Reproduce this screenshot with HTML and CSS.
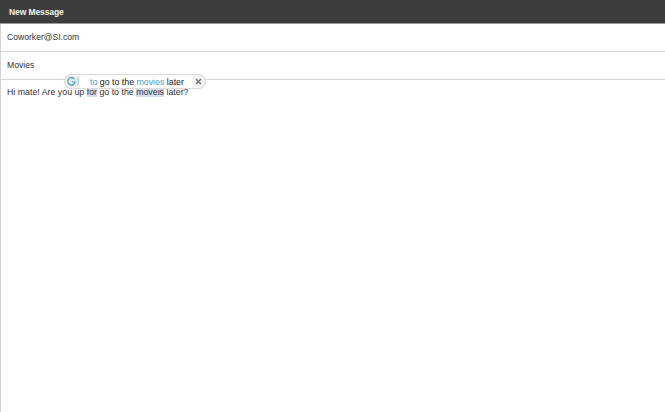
FILE: index.html
```html
<!DOCTYPE html>
<html lang="en">
<head>
<meta charset="utf-8">
<title>New Message</title>
<link rel="stylesheet" href="styles.css">
</head>
<body>
<div class="compose">
  <header class="title-bar">New Message</header>
  <div class="field">Coworker@SI.com</div>
  <div class="field">Movies</div>
  <div class="body-wrap">
    <div class="suggestion">
      <svg class="g-icon" width="15" height="13" viewBox="0 0 15 13" aria-hidden="true">
        <circle cx="6.5" cy="6.5" r="6" fill="#e3e8ea"/>
        <path d="M9.2 3.9A3.7 3.7 0 1 0 10.1 7H6.8" fill="none" stroke="#4b9fae" stroke-width="1.2"/>
        <path d="M12.6 2.5Q14.4 6.5 12.6 10.5" fill="none" stroke="#8fc3cf" stroke-width="1"/>
      </svg>
      <div class="suggestion-text"><span class="fix">to</span> go to the <span class="fix">movies</span> later</div>
      <svg class="close-icon" width="7" height="7" viewBox="0 0 7 7" aria-hidden="true">
        <path d="M1 1L6 6M6 1L1 6" stroke="#777" stroke-width="1.5"/>
      </svg>
    </div>
    <p class="message">Hi mate! Are you up <span class="mark">for</span> go to the <span class="mark">moveis</span> later?</p>
  </div>
</div>
</body>
</html>
```
FILE: styles.css
```css
html, body {
  margin: 0;
  height: 100%;
  background: #fff;
}
body {
  overflow: hidden;
  font-family: "Liberation Sans", Arial, sans-serif;
  font-size: 8.6px;
  color: #333;
}
.compose {
  display: flex;
  flex-direction: column;
  height: 100%;
  box-sizing: border-box;
}
.title-bar {
  flex: none;
  box-sizing: border-box;
  height: 24px;
  padding: 0 9px;
  display: flex;
  align-items: center;
  background: #3d3d3d;
  border-bottom: 1px solid #9a9a9a;
  color: #f2f2f2;
  font-size: 8.5px;
  letter-spacing: -0.1px;
  font-weight: bold;
}
.field {
  flex: none;
  box-sizing: border-box;
  height: 28px;
  padding: 0 6px 2px;
  display: flex;
  align-items: center;
  border-left: 1px solid #d4d4d4;
  border-bottom: 1px solid #d4d4d4;
}
.body-wrap {
  flex: 1;
  position: relative;
  border-left: 1px solid #d4d4d4;
  padding: 7px 6px;
}
.message {
  margin: 0;
  font-size: 8.8px;
  line-height: 11px;
}
.mark {
  background: #d3dff2;
}
.suggestion {
  position: absolute;
  left: 63px;
  top: -6px;
  box-sizing: border-box;
  width: 142px;
  height: 15px;
  display: flex;
  align-items: center;
  background: #f3f3f3;
  border: 1px solid #dcdcdc;
  border-radius: 8px;
  box-shadow: 0 0 1px #ccc;
}
.g-icon {
  flex: none;
}
.suggestion-text {
  flex: none;
  box-sizing: border-box;
  width: 112px;
  height: 13px;
  padding-left: 10px;
  background: #fff;
  color: #222;
  font-size: 8.8px;
  line-height: 14px;
  white-space: nowrap;
}
.fix {
  color: #4b9fc0;
}
.close-icon {
  flex: none;
  margin-left: 3px;
}
```
